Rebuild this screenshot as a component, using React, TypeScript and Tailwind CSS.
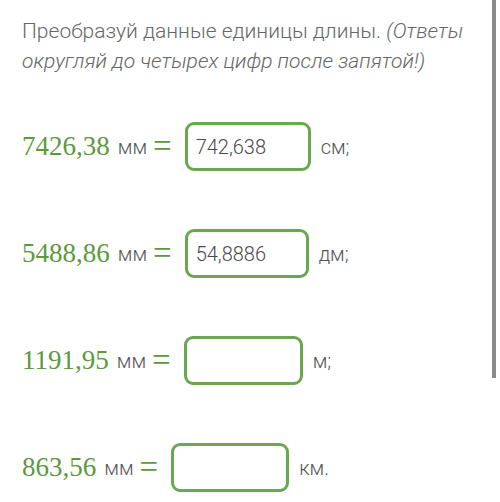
import React from "react";

type Row = { value: string; answer: string; unit: string; boxW: string };

const rows: Row[] = [
  { value: "7426,38", answer: "742,638", unit: "см;", boxW: "w-[126px]" },
  { value: "5488,86", answer: "54,8886", unit: "дм;", boxW: "w-[124px]" },
  { value: "1191,95", answer: "", unit: "м;", boxW: "w-[119px]" },
  { value: "863,56", answer: "", unit: "км.", boxW: "w-[118px]" },
];

const roboto = "font-['Roboto','Liberation_Sans',sans-serif]";
const serif = "font-['Liberation_Serif','Times_New_Roman',serif]";

function ConvertRow({ row }: { row: Row }) {
  return (
    <div className="flex h-[49px] items-center">
      <span className={`${serif} text-[27px] leading-none text-[#5b9a3c]`}>{row.value}</span>
      <span className={`${roboto} ml-[8px] text-[20px] font-light leading-none text-[#555]`}>мм</span>
      <span className={`${serif} ml-[6px] text-[33px] leading-none text-[#5b9a3c]`}>=</span>
      <div
        className={`${row.boxW} ml-[13px] flex h-[49px] items-center rounded-[9px] border-[3px] border-[#6aa84f] bg-white pl-[8px]`}
      >
        <span className={`${roboto} text-[20px] font-light text-[#4a4a4a]`}>{row.answer}</span>
      </div>
      <span className={`${roboto} ml-[10px] text-[20px] font-light leading-none text-[#555]`}>{row.unit}</span>
    </div>
  );
}

export default function App() {
  return (
    <div className="relative h-[502px] w-[500px] overflow-hidden bg-white">
      <div className="pl-[22px] pt-[16px]">
        <p className={`${roboto} w-[468px] text-[21px] font-light leading-[30px] text-[#666]`}>
          Преобразуй данные единицы длины. <i>(Ответы округляй до четырех цифр после запятой!)</i>
        </p>
        <div className="mt-[46px] flex flex-col gap-[58px]">
          {rows.map((r) => (
            <ConvertRow key={r.value} row={r} />
          ))}
        </div>
      </div>
      <div className="absolute right-[4px] top-0 h-[378px] w-[4px] bg-[#8a8a8a]" />
    </div>
  );
}
